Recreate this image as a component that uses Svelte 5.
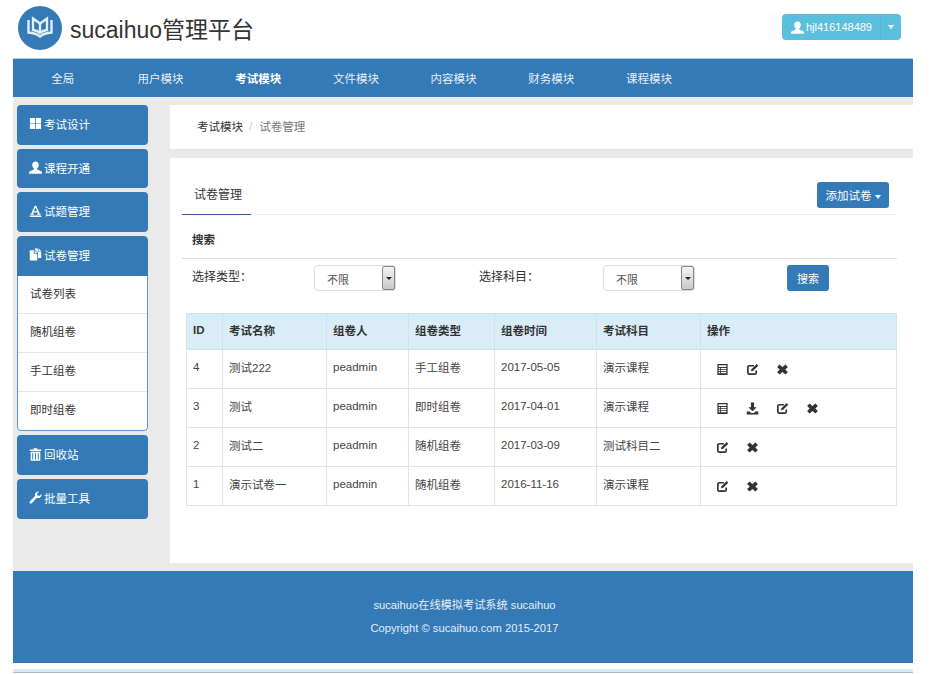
<script lang="ts">
	const navItems = ['全局', '用户模块', '考试模块', '文件模块', '内容模块', '财务模块', '课程模块'];

	const subItems = ['试卷列表', '随机组卷', '手工组卷', '即时组卷'];

	const rows = [
		{ id: 4, name: '测试222', owner: 'peadmin', type: '手工组卷', time: '2017-05-05', subject: '演示课程', actions: ['list', 'edit', 'remove'] },
		{ id: 3, name: '测试', owner: 'peadmin', type: '即时组卷', time: '2017-04-01', subject: '演示课程', actions: ['list', 'download', 'edit', 'remove'] },
		{ id: 2, name: '测试二', owner: 'peadmin', type: '随机组卷', time: '2017-03-09', subject: '测试科目二', actions: ['edit', 'remove'] },
		{ id: 1, name: '演示试卷一', owner: 'peadmin', type: '随机组卷', time: '2016-11-16', subject: '演示课程', actions: ['edit', 'remove'] }
	];
</script>

{#snippet icon(name: string)}
	<svg class="icon" viewBox="0 0 14 14" aria-hidden="true">
		{#if name === 'grid'}
			<path d="M1 1h5.6v5.6H1zM7.4 1H13v5.6H7.4zM1 7.4h5.6V13H1zM7.4 7.4H13V13H7.4z" />
		{:else if name === 'user'}
			<path d="M7 .6c2.2 0 3.5 1.600 3.500 3.800 0 1.600-.7 3-1.700 3.700v1l4.300 1.900c.6.3.9.8.9 1.400v1.200H0v-1.200c0-.6.3-1.100.9-1.400L5.200 9.100v-1C4.200 7.400 3.500 6 3.500 4.400 3.500 2.200 4.800.6 7 .6z" />
		{:else if name === 'text'}
			<path d="M6.200 .8h1.600l3.800 8.600h1v1.200H8.700V9.400h1.100L9.200 8H4.800l-.6 1.400h1.100v1.200H1.400V9.400h1zM5.300 6.800h3.400L7 2.800zM.8 11.400h12.400V13H.8z" />
		{:else if name === 'files'}
			<path d="M.8 2.500h4.400v3.800h3.700V13.500H.8zM6 2.600l2.700 2.900H6zM6.200 .5h3.300v3.400h3.700v7H9.700V5L6.200 1.500zM10.300 .6l2.800 2.600h-2.800z" />
		{:else if name === 'trash'}
			<path d="M5 .4h4v1.300h4.200v1.500H.8V1.700H5zM1.800 4h10.400v9.800H1.800zM3.500 5.300v7.200h1V5.300zM6.500 5.300v7.200h1V5.300zM9.500 5.300v7.200h1V5.300z" fill-rule="evenodd" />
		{:else if name === 'wrench'}
			<path d="M13.500 3.200a3.800 3.800 0 0 1-5 4.200L3.200 13a1.400 1.400 0 0 1-2.200-2L6.600 5.500A3.800 3.800 0 0 1 10.900.5L8.700 2.900l.5 2 2 .5z" />
		{:else if name === 'list'}
			<path d="M1.500 1h11v12h-11zM2.900 2.500v1.800h8.200V2.500zM2.900 5.300v1.300h1.500V5.300zM5.300 5.300v1.300h5.800V5.300zM2.900 7.500v1.300h1.500V7.500zM5.300 7.500v1.300h5.800V7.500zM2.900 9.700V11h1.500V9.700zM5.300 9.700V11h5.800V9.700z" fill-rule="evenodd" />
		{:else if name === 'edit'}
			<path d="M8.500 3H3.500A1.500 1.500 0 0 0 2 4.500v6A1.500 1.500 0 0 0 3.500 12h6a1.500 1.500 0 0 0 1.500-1.500V8" fill="none" stroke="currentColor" stroke-width="1.800" />
			<path d="M11.500 1.200l1.700 1.700-5.500 5.500-2.400.6.600-2.400z" />
		{:else if name === 'download'}
			<path d="M5.300 .6h3.400v5h2.800L7 10 2.500 5.600h2.800zM.8 10.200h3.100L5.500 11.800h3l1.600-1.600h3.100v3.300H.8z" />
		{:else if name === 'remove'}
			<path d="M3.800 1.600L7 4.400l3.200-2.800 2.600 2.600L10 7l2.800 2.800-2.600 2.600L7 9.600l-3.200 2.800-2.600-2.600L4 7 1.200 4.200z" />
		{/if}
	</svg>
{/snippet}

<div class="page">
	<header class="top">
		<div class="brand">
			<svg class="logo" viewBox="0 0 44 44" aria-hidden="true">
				<circle cx="22" cy="22" r="22" fill="#337ab7" />
				<g fill="none" stroke="#e4eef7" stroke-width="2.400">
					<path d="M10.500 14v12.500c4.500 .3 8.500 1.500 11.500 4 3-2.500 7-3.700 11.500-4V14" />
					<path d="M15 12.500l7 5 7-5V24c-2.800 .4-5 1.200-7 2.800-2-1.600-4.200-2.400-7-2.800z" />
					<path d="M22 18v8" />
				</g>
			</svg>
			<span class="title">sucaihuo管理平台</span>
		</div>
		<div class="user-btn">
			<span class="user-main">{@render icon('user')}hjl416148489</span>
			<span class="user-caret"><i class="caret"></i></span>
		</div>
	</header>

	<nav class="nav">
		{#each navItems as item, i}
			<span class="nav-item" class:active={i === 2}>{item}</span>
		{/each}
	</nav>

	<div class="body">
		<aside class="side">
			<div class="side-btn">{@render icon('grid')}考试设计</div>
			<div class="side-btn">{@render icon('user')}课程开通</div>
			<div class="side-btn">{@render icon('text')}试题管理</div>
			<div class="side-group">
				<div class="side-btn inner">{@render icon('files')}试卷管理</div>
				<ul class="sub">
					{#each subItems as s}
						<li>{s}</li>
					{/each}
				</ul>
			</div>
			<div class="side-btn">{@render icon('trash')}回收站</div>
			<div class="side-btn">{@render icon('wrench')}批量工具</div>
		</aside>

		<main class="main">
			<div class="crumb">
				<span class="crumb-a">考试模块</span>
				<span class="crumb-sep">/</span>
				<span class="crumb-b">试卷管理</span>
			</div>

			<section class="card">
				<div class="tabs">
					<span class="tab">试卷管理</span>
					<button class="btn add">添加试卷 <i class="caret"></i></button>
				</div>

				<h4 class="search-title">搜索</h4>

				<div class="filters">
					<span class="label first">选择类型：</span>
					<div class="select">
						<span>不限</span>
						<b class="arrow"><i class="caret dark"></i></b>
					</div>
					<span class="label second">选择科目：</span>
					<div class="select">
						<span>不限</span>
						<b class="arrow"><i class="caret dark"></i></b>
					</div>
					<button class="btn search">搜索</button>
				</div>

				<table class="table">
					<thead>
						<tr>
							<th class="c-id">ID</th>
							<th class="c-name">考试名称</th>
							<th class="c-owner">组卷人</th>
							<th class="c-type">组卷类型</th>
							<th class="c-time">组卷时间</th>
							<th class="c-subject">考试科目</th>
							<th>操作</th>
						</tr>
					</thead>
					<tbody>
						{#each rows as row}
							<tr>
								<td>{row.id}</td>
								<td>{row.name}</td>
								<td>{row.owner}</td>
								<td>{row.type}</td>
								<td>{row.time}</td>
								<td>{row.subject}</td>
								<td class="actions">
									{#each row.actions as a}
										<span class="action">{@render icon(a)}</span>
									{/each}
								</td>
							</tr>
						{/each}
					</tbody>
				</table>
			</section>
		</main>
	</div>

	<footer class="foot">
		<p>sucaihuo在线模拟考试系统 sucaihuo</p>
		<p>Copyright © sucaihuo.com 2015-2017</p>
	</footer>
	<div class="strip"></div>
</div>

<style>
	:global(body) {
		background: #fff;
		font-family: 'Liberation Sans', 'Noto Sans CJK SC', sans-serif;
		font-size: 11.5px;
		color: #333;
	}

	.page {
		width: 900px;
		margin-left: 13px;
	}

	.icon {
		width: 13px;
		height: 13px;
		fill: currentColor;
		flex: none;
	}

	.caret {
		display: inline-block;
		width: 0;
		height: 0;
		border-top: 4px solid #fff;
		border-left: 3.500px solid transparent;
		border-right: 3.500px solid transparent;
		vertical-align: 1px;
	}

	.caret.dark {
		border-top-color: #222;
		border-left-width: 3px;
		border-right-width: 3px;
		border-top-width: 3px;
	}

	.top {
		height: 58px;
		display: flex;
		align-items: flex-start;
		justify-content: space-between;
		padding: 6px 12px 0 5px;
		box-sizing: border-box;
		background: #fff;
	}

	.brand {
		display: flex;
		align-items: center;
		gap: 8px;
	}

	.logo {
		width: 44px;
		height: 44px;
	}

	.title {
		font-size: 23px;
		color: #333;
	}

	.user-btn {
		display: flex;
		height: 26px;
		margin-top: 8px;
		background: #5bc0de;
		border-radius: 4px;
		color: #fff;
		font-size: 11px;
	}

	.user-main {
		display: flex;
		align-items: center;
		gap: 2px;
		padding: 0 8px 0 9px;
		border-right: 1px solid #55b8d6;
	}

	.user-caret {
		display: flex;
		align-items: center;
		padding: 0 6px 0 7px;
		width: 7px;
	}

	.nav {
		height: 39px;
		display: flex;
		padding-left: 1px;
		background: #337ab7;
		border-top: 1px solid #a9cfe2;
		box-sizing: border-box;
	}

	.nav-item {
		width: 97.700px;
		text-align: center;
		line-height: 40px;
		color: #e6eef6;
	}

	.nav-item.active {
		color: #fff;
		font-weight: 700;
	}

	.body {
		height: 474px;
		display: flex;
		background: #eaeaea;
		box-sizing: border-box;
		padding-top: 8px;
	}

	.side {
		width: 157px;
		padding: 0 0 0 4px;
		box-sizing: border-box;
		display: flex;
		flex-direction: column;
		gap: 4px;
	}

	.side-btn {
		width: 131px;
		height: 39.700px;
		box-sizing: border-box;
		background: #337ab7;
		border-radius: 4px;
		color: #fff;
		display: flex;
		align-items: center;
		gap: 2px;
		padding: 0 0 2px 12px;
	}

	.side-btn.inner {
		border-radius: 4px 4px 0 0;
	}

	.side-group {
		width: 131px;
		border-radius: 4px;
		overflow: hidden;
		background: #fff;
		box-sizing: border-box;
	}

	.sub {
		margin: 0;
		padding: 0;
		list-style: none;
		border: 1px solid #5c94c5;
		border-top: 0;
		border-radius: 0 0 4px 4px;
	}

	.sub li {
		height: 39px;
		line-height: 37px;
		box-sizing: border-box;
		padding-left: 12px;
		border-top: 1px solid #e6e6e6;
	}

	.sub li:first-child {
		border-top: 0;
		height: 37.500px;
	}

	.main {
		width: 743px;
		display: flex;
		flex-direction: column;
		gap: 8px;
	}

	.crumb {
		height: 45px;
		background: #fff;
		display: flex;
		align-items: center;
		padding: 0 0 2px 27px;
		box-sizing: border-box;
		border-bottom: 1px solid #e4e4e4;
	}

	.crumb-sep {
		color: #ccc;
		margin: 0 7px 0 6px;
	}

	.crumb-b {
		color: #777;
	}

	.card {
		height: 405px;
		background: #fff;
		padding: 0 16px 0 12px;
		box-sizing: border-box;
	}

	.tabs {
		height: 57px;
		display: flex;
		align-items: flex-start;
		justify-content: space-between;
		border-bottom: 1px solid #eee;
		box-sizing: border-box;
		padding: 24px 8px 0 0;
	}

	.tab {
		width: 69px;
		box-sizing: border-box;
		padding: 3px 0 0 12px;
		height: 33px;
		border-bottom: 1px solid #2f5f94;
		font-size: 12px;
		color: #333;
	}

	.btn {
		border: 0;
		background: #337ab7;
		color: #fff;
		border-radius: 3px;
		font: inherit;
		height: 26px;
		padding: 0;
	}

	.add {
		width: 72px;
	}

	.search-title {
		margin: 0;
		height: 44px;
		line-height: 51px;
		padding-left: 10px;
		font-size: 11.500px;
		font-weight: 700;
		border-bottom: 1px solid #ddd;
		box-sizing: border-box;
	}

	.filters {
		display: flex;
		align-items: flex-start;
		padding-top: 6px;
		height: 54px;
		box-sizing: border-box;
	}

	.label {
		font-size: 12px;
		line-height: 24px;
		color: #333;
	}

	.label.first {
		margin-left: 10px;
		width: 122px;
	}

	.label.second {
		margin-left: 83px;
		width: 124px;
	}

	.select {
		width: 82px;
		height: 26px;
		display: flex;
		justify-content: space-between;
		border: 1px solid #ddd;
		border-radius: 4px;
		box-sizing: border-box;
		padding-left: 12px;
		font-size: 11px;
		line-height: 28px;
		color: #555;
	}

	.select + .label + .select {
		width: 92px;
	}

	.arrow {
		width: 13px;
		height: 24px;
		background: linear-gradient(#f4f4f4, #c9c9c9);
		border: 1px solid #888;
		border-radius: 2px;
		box-sizing: border-box;
		display: flex;
		align-items: center;
		justify-content: center;
	}

	.search {
		width: 42px;
		margin-left: 92px;
		font-size: 11px;
	}

	.table {
		width: 711px;
		margin-left: 4px;
		table-layout: fixed;
		border-collapse: collapse;
		border: 1px solid #ddd;
	}

	.c-id { width: 36px; }
	.c-name { width: 104px; }
	.c-owner { width: 82px; }
	.c-type { width: 86px; }
	.c-time { width: 102px; }
	.c-subject { width: 104px; }

	th, td {
		box-sizing: border-box;
		border: 1px solid #e2e2e2;
		padding: 0 0 4px 6px;
		text-align: left;
		font-size: 11.500px;
	}

	th {
		height: 36px;
		background: #d9edf7;
		border-color: #cfe3ee;
		font-weight: 700;
	}

	td {
		height: 39px;
		color: #444;
	}

	td.actions {
		padding: 0 0 0 15px;
		font-size: 0;
	}

	.action {
		display: inline-flex;
		width: 30px;
		color: #333;
		vertical-align: middle;
	}

	.foot {
		height: 92px;
		background: #337ab7;
		color: #e6eef6;
		text-align: center;
		font-size: 11.200px;
		padding: 27px 0 0 3px;
		box-sizing: border-box;
	}

	.foot p {
		margin: 0 0 8px;
		line-height: 15px;
	}

	.strip {
		height: 3px;
		margin-top: 6px;
		background: #dce8f3;
		border-bottom: 1px solid #a9bdd2;
	}
</style>
